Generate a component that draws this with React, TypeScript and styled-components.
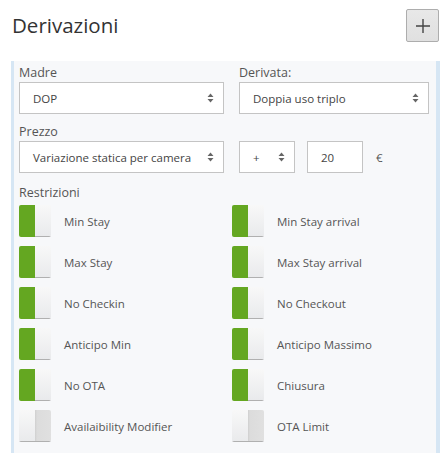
import React from 'react';
import styled, {createGlobalStyle} from 'styled-components';

const GlobalStyle = createGlobalStyle`
  body {
    margin: 0;
    background: #fff;
    font-family: "Open Sans", "Liberation Sans", sans-serif;
    color: #333;
  }
`

const Page = styled.div`
  width: 445px;
  height: 453px;
  overflow: hidden;
  box-sizing: border-box;
  padding: 9px 5px 0 11px;
`

const Header = styled.div`
  display: flex;
  justify-content: space-between;
  align-items: flex-start;
  height: 52px;
`

const Title = styled.h2`
  margin: 2px 0 0 1px;
  font-size: 20.5px;
  font-weight: normal;
  color: #333;
`

const AddButton = styled.button`
  width: 33px;
  height: 33px;
  padding: 0;
  margin-right: 1px;
  display: flex;
  align-items: center;
  justify-content: center;
  background: linear-gradient(#e8e8e8, #e0e0e0);
  border: 1px solid #adadad;
  border-radius: 2px;
  color: #333;
`

const Panel = styled.div`
  background: #f7f8fa;
  border-left: 3px solid #d6e6f4;
  border-right: 4px solid #d6e6f4;
  padding: 4px 7px 20px 5px;
  width: 429px;
  box-sizing: border-box;
`

const Row = styled.div<{$gapBelow: number}>`
  display: flex;
  gap: 15px;
  margin-bottom: ${p => p.$gapBelow}px;
`

const Field = styled.div<{$w: number}>`
  width: ${p => p.$w}px;
  display: flex;
  flex-direction: column;
`

const Label = styled.div`
  font-size: 12.5px;
  color: #555;
  height: 16px;
  line-height: 16px;
  margin-bottom: 1px;
`

const Box = styled.div<{$w?: number}>`
  box-sizing: border-box;
  height: 32px;
  width: ${p => (p.$w ? `${p.$w}px` : '100%')};
  background: #fff;
  border: 1px solid #c4c4c4;
  display: flex;
  align-items: center;
  justify-content: space-between;
  padding: 0 9px 0 13px;
  font-size: 11.5px;
  color: #444;
`

const Inline = styled.div`
  display: flex;
  align-items: center;
  gap: 12px;
`

const Euro = styled.span`
  font-size: 11.5px;
  color: #555;
  margin-left: 1px;
`

const Grid = styled.div`
  display: grid;
  grid-template-columns: 213px 1fr;
  row-gap: 9px;
  margin-top: 4px;
`

const Item = styled.div`
  display: flex;
  align-items: center;
  gap: 13px;
  font-size: 11.5px;
  color: #555;
`

const Switch = styled.div`
  width: 32px;
  height: 32px;
  display: flex;
  border-radius: 2px;
  overflow: hidden;
  flex-shrink: 0;
`

const Half = styled.div<{$kind: 'green' | 'light' | 'grey'}>`
  width: 16px;
  height: 100%;
  box-sizing: border-box;
  background: ${p =>
    p.$kind === 'green'
      ? '#64a721'
      : p.$kind === 'grey'
      ? 'linear-gradient(90deg, #cfcfcf 0, #dcdcdc 2px, #e0e0e0)'
      : 'linear-gradient(#f8f8f8, #e9eaec)'};
  border-bottom: ${p => (p.$kind === 'green' ? 'none' : '1px solid #b0b0b0')};
`

const Arrows = () => (
  <svg width="7" height="10" viewBox="0 0 7 10">
    <path d="M3.5 0.5 L6.5 4 L0.5 4 Z M3.5 9.5 L6.5 6 L0.5 6 Z" fill="#666" />
  </svg>
)

const Toggle: React.FC<{on: boolean}> = ({on}) => (
  <Switch>
    {on ? (
      <>
        <Half $kind="green" />
        <Half $kind="light" />
      </>
    ) : (
      <>
        <Half $kind="light" />
        <Half $kind="grey" />
      </>
    )}
  </Switch>
)

const restrictions: [string, boolean][] = [
  ['Min Stay', true],
  ['Min Stay arrival', true],
  ['Max Stay', true],
  ['Max Stay arrival', true],
  ['No Checkin', true],
  ['No Checkout', true],
  ['Anticipo Min', true],
  ['Anticipo Massimo', true],
  ['No OTA', true],
  ['Chiusura', true],
  ['Availaibility Modifier', false],
  ['OTA Limit', false],
]

const App: React.FC = () => {
  return (
    <Page>
      <GlobalStyle />
      <Header>
        <Title>Derivazioni</Title>
        <AddButton>
          <svg width="16" height="16" viewBox="0 0 16 16">
            <path d="M8 1 V15 M1 8 H15" stroke="#444" strokeWidth="1.4" />
          </svg>
        </AddButton>
      </Header>
      <Panel>
        <Row $gapBelow={10}>
          <Field $w={205}>
            <Label>Madre</Label>
            <Box>DOP<Arrows /></Box>
          </Field>
          <Field $w={190}>
            <Label>Derivata:</Label>
            <Box>Doppia uso triplo<Arrows /></Box>
          </Field>
        </Row>
        <Row $gapBelow={12}>
          <Field $w={205}>
            <Label>Prezzo</Label>
            <Box>Variazione statica per camera<Arrows /></Box>
          </Field>
          <Field $w={190}>
            <Label />
            <Inline>
              <Box $w={56}>+<Arrows /></Box>
              <Box $w={56}>20</Box>
              <Euro>€</Euro>
            </Inline>
          </Field>
        </Row>
        <Label>Restrizioni</Label>
        <Grid>
          {restrictions.map(([name, on]) => (
            <Item key={name}>
              <Toggle on={on} />
              {name}
            </Item>
          ))}
        </Grid>
      </Panel>
    </Page>
  )
}

export default App;
